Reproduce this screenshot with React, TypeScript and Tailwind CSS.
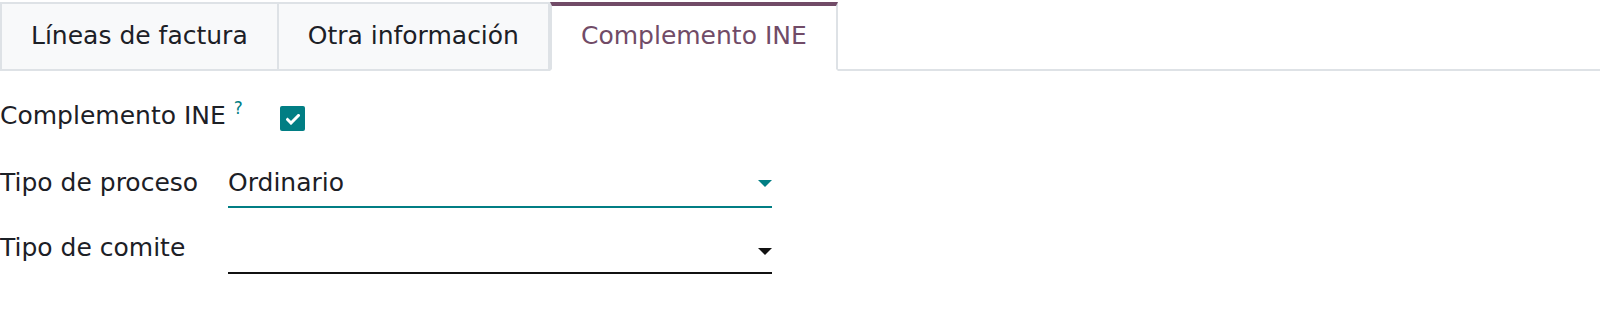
import React from "react";

const tabs = ["Líneas de factura", "Otra información", "Complemento INE"];

function Caret({ color }: { color: string }) {
  return (
    <svg width="14" height="7" viewBox="0 0 14 7" className="shrink-0">
      <polygon points="0,0 14,0 7,7" fill={color} />
    </svg>
  );
}

export default function App() {
  const active = 2;

  return (
    <div className="w-[1600px] h-[326px] bg-white font-['DejaVu_Sans',sans-serif] text-[25px] leading-[30px] text-[#1c2026]">
      <div className="mt-[2px] flex border-b-2 border-[#dee2e6]">
        {tabs.map((t, i) =>
          i === active ? (
            <div
              key={t}
              className="-mb-[2px] h-[69px] px-[29px] pt-[14.5px] bg-white border-t-4 border-t-[#714b67] border-x-2 border-x-[#dee2e6] border-b-2 border-b-white text-[#714b67] whitespace-nowrap"
            >
              {t}
            </div>
          ) : (
            <div
              key={t}
              className={
                "-mb-[2px] h-[69px] px-[29px] pt-[16.5px] bg-[#f8f9fa] border-2 border-[#dee2e6] whitespace-nowrap" +
                (i > 0 ? " border-l-0" : "")
              }
            >
              {t}
            </div>
          )
        )}
      </div>

      <div className="mt-[30px] flex items-start h-[30px]">
        <div className="w-[280px] flex items-start">
          <span>Complemento INE</span>
          <span className="ml-[8px] -mt-[1px] text-[17px] leading-none text-[#017e84]">?</span>
        </div>
        <div className="mt-[5px] w-[25px] h-[25px] rounded-[2px] bg-[#017e84] flex items-center justify-center">
          <svg width="14" height="11" viewBox="0 0 14 11" className="mt-[2px]">
            <path d="M1.5 5.5 L5 9 L12.5 1.5" fill="none" stroke="white" strokeWidth="3" strokeLinecap="square" />
          </svg>
        </div>
      </div>

      <div className="mt-[37px] flex">
        <div className="w-[228px] shrink-0">Tipo de proceso</div>
        <div className="w-[544px] flex items-center justify-between pb-[8px] border-b-2 border-[#017e84]">
          <span>Ordinario</span>
          <Caret color="#017e84" />
        </div>
      </div>

      <div className="mt-[25px] flex">
        <div className="w-[228px] shrink-0">Tipo de comite</div>
        <div className="w-[544px] h-[41px] flex items-start justify-between pt-[15px] border-b-2 border-[#111]">
          <span />
          <Caret color="#111" />
        </div>
      </div>
    </div>
  );
}
